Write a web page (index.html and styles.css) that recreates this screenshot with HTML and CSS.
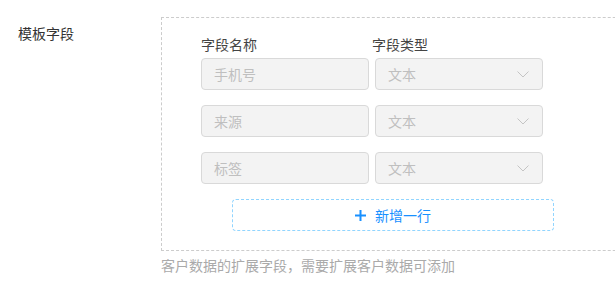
FILE: index.html
```html
<!DOCTYPE html>
<html lang="zh-CN">
<head>
    <meta charset="UTF-8">
    <meta name="viewport" content="width=device-width, initial-scale=1.0">
    <title>模板字段</title>
    <link rel="stylesheet" href="styles.css">
</head>
<body>
    <div class="form-item">
        <div class="form-label">模板字段</div>
        <div class="form-control">
            <div class="field-box">
                <div class="field-head">
                    <span class="col">字段名称</span>
                    <span class="col">字段类型</span>
                </div>

                <div class="field-list">
                    <div class="field-row">
                        <div class="input disabled">手机号</div>
                        <div class="select disabled">
                            <span>文本</span>
                            <svg class="arrow" width="12" height="7" viewBox="0 0 12 7"><polyline points="0.5,0.5 6,6 11.5,0.5" fill="none" stroke="#c4c4c4" stroke-width="1"/></svg>
                        </div>
                    </div>
                    <div class="field-row">
                        <div class="input disabled">来源</div>
                        <div class="select disabled">
                            <span>文本</span>
                            <svg class="arrow" width="12" height="7" viewBox="0 0 12 7"><polyline points="0.5,0.5 6,6 11.5,0.5" fill="none" stroke="#c4c4c4" stroke-width="1"/></svg>
                        </div>
                    </div>
                    <div class="field-row">
                        <div class="input disabled">标签</div>
                        <div class="select disabled">
                            <span>文本</span>
                            <svg class="arrow" width="12" height="7" viewBox="0 0 12 7"><polyline points="0.5,0.5 6,6 11.5,0.5" fill="none" stroke="#c4c4c4" stroke-width="1"/></svg>
                        </div>
                    </div>
                </div>

                <button class="btn-add">
                    <svg width="11" height="11" viewBox="0 0 11 11"><path d="M5.5 0v11M0 5.5h11" stroke="#1890ff" stroke-width="2"/></svg>
                    新增一行
                </button>
            </div>
            <p class="form-tip">客户数据的扩展字段，需要扩展客户数据可添加</p>
        </div>
    </div>
</body>
</html>
```

FILE: styles.css
```css
* {
    margin: 0;
    padding: 0;
    box-sizing: border-box;
}

body {
    font-family: "Noto Sans CJK SC", "Noto Sans", sans-serif;
    font-size: 14px;
    line-height: 20px;
    background: #fff;
    color: #333;
    overflow: hidden;
}

.form-item {
    display: flex;
    align-items: flex-start;
    margin-top: 17px;
}

.form-label {
    flex: none;
    width: 161px;
    padding-left: 18px;
    padding-top: 6px;
    color: #333;
}

/* 虚线框向右延伸出可视区域 */
.form-control {
    flex: 1;
    min-width: 0;
    overflow: hidden;
}

.field-box {
    width: 520px;
    border: 1px dashed #ccc;
    padding: 16px 0 19px 39px;
}

.field-head {
    display: flex;
    gap: 3px;
    margin-bottom: 4px;
    color: #444;
}

.col {
    width: 168px;
}

.field-list {
    display: flex;
    flex-direction: column;
    gap: 15px;
}

.field-row {
    display: flex;
    gap: 6px;
}

.input,
.select {
    width: 168px;
    height: 32px;
    border: 1px solid #d9d9d9;
    border-radius: 4px;
    padding: 0 12px;
    display: flex;
    align-items: center;
}

.disabled {
    background: #f3f3f3;
    color: #bfbfbf;
}

.select {
    justify-content: space-between;
}

.arrow {
    margin-right: 1px;
}

.btn-add {
    margin: 15px 0 0 31px;
    width: 322px;
    height: 32px;
    border: 1px dashed #91d5ff;
    border-radius: 4px;
    background: #fff;
    color: #1890ff;
    font-family: inherit;
    font-size: 14px;
    display: flex;
    align-items: center;
    justify-content: center;
    gap: 9px;
    cursor: pointer;
}

.form-tip {
    margin-top: 4px;
    color: #aaa;
}
```
